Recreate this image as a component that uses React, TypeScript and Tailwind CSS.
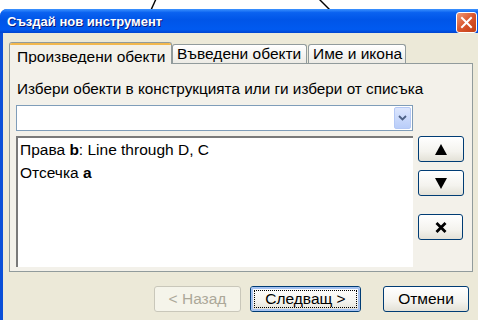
import React from "react";

const F = { fontFamily: '"Liberation Sans", Arial, sans-serif' };

function XpButton({
  children,
  w,
  disabled,
  focused,
  className = "",
}: {
  children: React.ReactNode;
  w: string;
  disabled?: boolean;
  focused?: boolean;
  className?: string;
}) {
  if (disabled) {
    return (
      <div
        className={`${w} h-[26px] rounded-[3px] border border-[#C9C7BA] bg-[#F5F4EA] text-[#ACA899] text-[15.5px] flex items-center justify-center ${className}`}
      >
        {children}
      </div>
    );
  }
  return (
    <div
      className={`${w} h-[26px] rounded-[3px] border border-[#003C74] bg-[linear-gradient(to_bottom,#FFFFFF_0%,#F4F3EE_60%,#E3E1D7_100%)] text-black text-[15.5px] flex items-center justify-center ${className}`}
    >
      {focused ? (
        <div className="w-full h-full rounded-[2px] border-2 border-[#A6C2F1] flex items-center justify-center p-px">
          <div className="w-full h-full border border-dotted border-black flex items-center justify-center">
            {children}
          </div>
        </div>
      ) : (
        children
      )}
    </div>
  );
}

export default function App() {
  return (
    <div className="w-[478px] h-[320px] bg-white overflow-hidden flex flex-col" style={F}>
      {/* background canvas strip */}
      <div className="h-[9px] shrink-0 relative">
        <svg width="478" height="9" className="block">
          <line x1="151" y1="10" x2="156" y2="-1" stroke="#000" strokeWidth="1.4" />
          <line x1="319" y1="-1" x2="330" y2="10" stroke="#000" strokeWidth="1.4" />
        </svg>
      </div>

      {/* window */}
      <div className="w-[484px] flex-1 flex flex-col rounded-t-[7px] overflow-hidden bg-[#0A4FD8]">
        {/* title bar */}
        <div className="h-[24px] shrink-0 flex items-center justify-between pl-[7px] pr-[7px] bg-[linear-gradient(to_bottom,#3D93FF_0%,#0A62F0_15%,#0055E8_45%,#005AF0_85%,#0044D0_100%)]">
          <span className="text-white font-bold text-[13px] [text-shadow:1px_1px_0_#0A1A7A] pt-[2px]">
            Създай нов инструмент
          </span>
          <div className="w-[21px] h-[21px] mt-[3px] rounded-[3px] border border-white bg-[linear-gradient(135deg,#EF9A7A_0%,#D9552C_50%,#C23E14_100%)] flex items-center justify-center">
            <svg width="13" height="13" viewBox="0 0 13 13">
              <path d="M2 2 L11 11 M11 2 L2 11" stroke="#fff" strokeWidth="2" strokeLinecap="square" />
            </svg>
          </div>
        </div>

        {/* body */}
        <div className="flex-1 ml-[3px] mr-[3px] bg-[#ECE9D8] pl-[6px] pt-[8px] flex flex-col">
          {/* tabs */}
          <div className="flex items-end h-[22px]">
            <div className="relative z-10 w-[163px] h-[22px] -mb-px rounded-t-[3px] border border-b-0 border-[#919B9C] bg-[#F3F1EA] flex flex-col overflow-hidden">
              <div className="h-[2px] bg-[#F2B84E] shrink-0" />
              <div className="flex-1 flex items-center pl-[7px] text-[15.5px] text-black whitespace-nowrap">
                Произведени обекти
              </div>
            </div>
            <div className="w-[135px] h-[19px] rounded-t-[3px] border border-b-0 border-[#919B9C] bg-[linear-gradient(to_bottom,#FFFFFF,#ECEBE5)] flex items-center pl-[4px] text-[15.5px] text-black whitespace-nowrap">
              Въведени обекти
            </div>
            <div className="w-[98px] ml-px h-[19px] rounded-t-[3px] border border-b-0 border-[#919B9C] bg-[linear-gradient(to_bottom,#FFFFFF,#ECEBE5)] flex items-center pl-[4px] text-[15.5px] text-black whitespace-nowrap">
              Име и икона
            </div>
          </div>

          {/* panel */}
          <div className="w-[464px] h-[209px] border border-[#919B9C] bg-[#F3F1EA] pl-[6px] pt-[15px] flex flex-col">
            <div className="h-[20px] leading-[20px] pl-px text-[15.3px] text-black whitespace-nowrap">
              Избери обекти в конструкцията или ги избери от списъка
            </div>
            <div className="mt-[6px] w-[397px] h-[26px] border border-[#7F9DB9] bg-white flex justify-end items-center pr-px">
              <div className="w-[17px] h-[22px] rounded-[2px] bg-[linear-gradient(to_bottom,#DCE6FD,#B9CDF9)] border border-[#B4C8F5] flex items-center justify-center">
                <svg width="9" height="6" viewBox="0 0 9 6">
                  <path d="M1 1 L4.5 4.5 L8 1" stroke="#4D6185" strokeWidth="1.8" fill="none" />
                </svg>
              </div>
            </div>
            <div className="mt-[5px] flex">
              <div className="w-[397px] h-[131px] border-t-2 border-l-2 border-t-[#7A7A7A] border-l-[#7A7A7A] bg-white pl-[2px] text-[15.5px] text-black">
                <div className="h-[23px] leading-[23px] whitespace-nowrap">
                  Права <b>b</b>: Line through D, C
                </div>
                <div className="h-[23px] leading-[23px] whitespace-nowrap">
                  Отсечка <b>a</b>
                </div>
              </div>
              <div className="ml-[5px] flex flex-col">
                <XpButton w="w-[46px]">
                  <svg width="14" height="13" viewBox="0 0 14 13">
                    <polygon points="7,1 13,12 1,12" fill="#000" />
                  </svg>
                </XpButton>
                <XpButton w="w-[46px]" className="mt-[8px]">
                  <svg width="14" height="13" viewBox="0 0 14 13">
                    <polygon points="1,1 13,1 7,12" fill="#000" />
                  </svg>
                </XpButton>
                <XpButton w="w-[45px]" className="mt-[18px]">
                  <svg width="12" height="11" viewBox="0 0 12 11">
                    <path d="M1.5 1 L10.5 10 M10.5 1 L1.5 10" stroke="#000" strokeWidth="2.8" />
                  </svg>
                </XpButton>
              </div>
            </div>
          </div>

          {/* bottom buttons */}
          <div className="mt-[14px] flex">
            <XpButton w="w-[87px]" disabled className="ml-[145px]">
              &lt; Назад
            </XpButton>
            <XpButton w="w-[111px]" focused className="ml-[9px]">
              Следващ &gt;
            </XpButton>
            <XpButton w="w-[86px]" className="ml-[22px]">
              Отмени
            </XpButton>
          </div>
        </div>
      </div>
    </div>
  );
}
